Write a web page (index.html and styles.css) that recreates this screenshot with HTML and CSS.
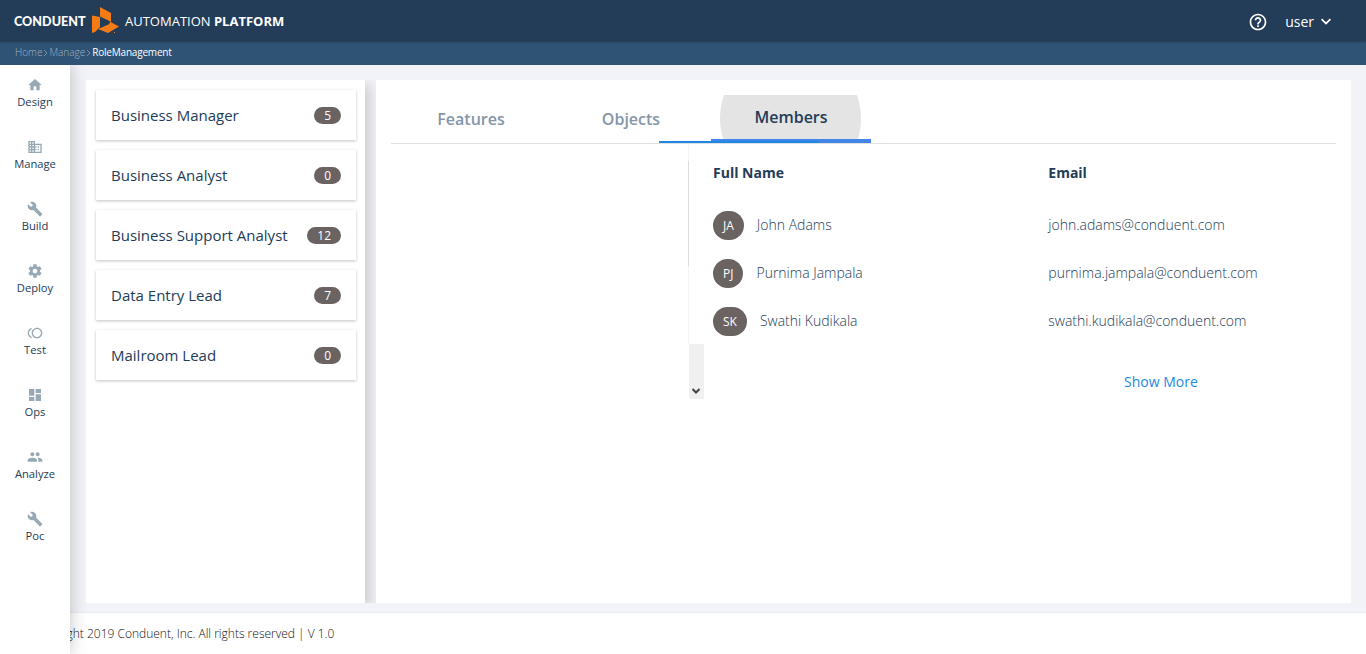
FILE: index.html
```html
<!DOCTYPE html>
<html lang="en">
<head>
<meta charset="utf-8">
<title>Role Management</title>
<link rel="stylesheet" href="styles.css">
</head>
<body>
<div class="app">
  <header class="topbar">
    <div class="brand">
      <span class="brand-name">CONDUENT</span>
      <svg class="brand-mark" viewBox="0 0 27 27"><g fill="#f57c14"><path d="M8 0L19 6V15L17.500 14L8 9.500Z"/><path d="M0 8.500L8 10V20L3 25L0 26Z"/><path d="M17.500 14.500L27 19.500L16 26L6 22L17.500 17Z"/><path d="M22 25h1v1h-1z"/></g><path d="M8.500 10.500L18 15.500L8.500 20.500Z" fill="#233c58"/></svg>
      <span class="product">AUTOMATION <b>PLATFORM</b></span>
    </div>
    <div class="account">
      <svg class="help" viewBox="0 0 24 24"><path d="M11 18h2v-2h-2v2zm1-16C6.480 2 2 6.480 2 12s4.480 10 10 10 10-4.480 10-10S17.520 2 12 2zm0 18c-4.410 0-8-3.590-8-8s3.590-8 8-8 8 3.590 8 8-3.590 8-8 8zm0-14c-2.210 0-4 1.790-4 4h2c0-1.100.9-2 2-2s2 .9 2 2c0 2-3 1.750-3 5h2c0-2.250 3-2.500 3-5 0-2.210-1.790-4-4-4z"/></svg>
      <span class="user">user</span>
      <svg class="caret" viewBox="0 0 24 24"><path d="M7.410 7.840L12 12.420l4.590-4.580L18 9.250l-6 6-6-6z"/></svg>
    </div>
  </header>
  <nav class="crumbs">
    <span>Home</span><svg viewBox="0 0 5 8"><path d="M1 1l3 3-3 3"/></svg><span>Manage</span><svg viewBox="0 0 5 8"><path d="M1 1l3 3-3 3"/></svg><span class="current">RoleManagement</span>
  </nav>
  <div class="shell">
    <aside class="sidebar">
      <a class="nav-item"><svg viewBox="0 0 24 24"><path d="M10 20v-6h4v6h5v-8h3L12 3 2 12h3v8z"/></svg>Design</a>
      <a class="nav-item"><svg viewBox="0 0 24 24"><path d="M12 7V3H2v18h20V7H12zM6 19H4v-2h2v2zm0-4H4v-2h2v2zm0-4H4V9h2v2zm0-4H4V5h2v2zm4 12H8v-2h2v2zm0-4H8v-2h2v2zm0-4H8V9h2v2zm0-4H8V5h2v2zm10 12h-8v-2h2v-2h-2v-2h2v-2h-2V9h8v10zm-2-8h-2v2h2v-2zm0 4h-2v2h2v-2z"/></svg>Manage</a>
      <a class="nav-item"><svg viewBox="0 0 24 24"><path d="M22.700 19l-9.100-9.100c.9-2.300.4-5-1.500-6.900-2-2-5-2.400-7.400-1.300L9 6 6 9 1.600 4.700C.4 7.100.9 10.100 2.900 12.100c1.900 1.900 4.600 2.400 6.900 1.500l9.100 9.100c.4.4 1 .4 1.400 0l2.300-2.300c.5-.4.5-1.100.1-1.400z"/></svg>Build</a>
      <a class="nav-item"><svg viewBox="0 0 24 24"><path d="M19.430 12.980c.04-.32.07-.64.07-.98s-.03-.66-.07-.98l2.110-1.650c.19-.15.24-.42.12-.64l-2-3.460c-.12-.22-.39-.3-.61-.22l-2.490 1c-.52-.4-1.080-.73-1.690-.98l-.38-2.650C14.460 2.180 14.250 2 14 2h-4c-.25 0-.46.18-.49.42l-.38 2.650c-.61.25-1.170.59-1.690.98l-2.490-1c-.23-.09-.49 0-.61.22l-2 3.460c-.13.22-.07.49.12.64l2.110 1.650c-.04.32-.07.65-.07.98s.03.66.07.98l-2.110 1.650c-.19.15-.24.42-.12.64l2 3.460c.12.22.39.3.61.22l2.490-1c.52.4 1.080.73 1.690.98l.38 2.650c.03.24.24.42.49.42h4c.25 0 .46-.18.49-.42l.38-2.650c.61-.25 1.170-.59 1.690-.98l2.490 1c.23.09.49 0 .61-.22l2-3.460c.12-.22.07-.49-.12-.64l-2.110-1.650zM12 15.500c-1.930 0-3.500-1.570-3.500-3.500s1.570-3.500 3.500-3.500 3.500 1.570 3.500 3.500-1.570 3.500-3.500 3.500z"/></svg>Deploy</a>
      <a class="nav-item"><svg viewBox="0 0 24 24"><path d="M15 4c-4.420 0-8 3.580-8 8s3.580 8 8 8 8-3.580 8-8-3.580-8-8-8zm0 14c-3.310 0-6-2.690-6-6s2.690-6 6-6 6 2.690 6 6-2.690 6-6 6zM3 12c0-2.610 1.670-4.830 4-5.650V4.260C3.550 5.150 1 8.270 1 12s2.550 6.850 6 7.740v-2.090c-2.330-.82-4-3.040-4-5.650z"/></svg>Test</a>
      <a class="nav-item"><svg viewBox="0 0 24 24"><path d="M3 13h8V3H3v10zm0 8h8v-6H3v6zm10 0h8V11h-8v10zm0-18v6h8V3h-8z"/></svg>Ops</a>
      <a class="nav-item"><svg viewBox="0 0 24 24"><path d="M16 11c1.660 0 2.990-1.340 2.990-3S17.660 5 16 5c-1.660 0-3 1.340-3 3s1.340 3 3 3zm-8 0c1.660 0 2.990-1.340 2.990-3S9.660 5 8 5C6.340 5 5 6.340 5 8s1.340 3 3 3zm0 2c-2.330 0-7 1.170-7 3.500V19h14v-2.500c0-2.330-4.670-3.500-7-3.500zm8 0c-.29 0-.62.02-.97.05 1.160.84 1.970 1.970 1.970 3.450V19h6v-2.500c0-2.330-4.670-3.500-7-3.500z"/></svg>Analyze</a>
      <a class="nav-item"><svg viewBox="0 0 24 24"><path d="M22.700 19l-9.100-9.100c.9-2.300.4-5-1.500-6.900-2-2-5-2.400-7.400-1.300L9 6 6 9 1.600 4.700C.4 7.100.9 10.100 2.900 12.100c1.900 1.900 4.600 2.400 6.900 1.500l9.100 9.100c.4.4 1 .4 1.400 0l2.300-2.300c.5-.4.5-1.100.1-1.400z"/></svg>Poc</a>
    </aside>
    <div class="page">
      <main class="content">
        <section class="roles">
          <div class="role">Business Manager<span class="count">5</span></div>
          <div class="role">Business Analyst<span class="count">0</span></div>
          <div class="role">Business Support Analyst<span class="count">12</span></div>
          <div class="role">Data Entry Lead<span class="count">7</span></div>
          <div class="role">Mailroom Lead<span class="count">0</span></div>
        </section>
        <section class="detail">
          <div class="tabs">
            <div class="tab">Features</div>
            <div class="tab">Objects</div>
            <div class="tab active"><i class="ripple"></i><span>Members</span></div>
            <i class="ink"></i>
          </div>
          <div class="detail-body">
            <div class="rail">
              <i class="rail-line"></i>
              <div class="scroll-end"><svg viewBox="0 0 8 6"><path d="M.5 1L4 4.500 7.500 1"/></svg></div>
            </div>
            <div class="members">
              <div class="row head"><span>Full Name</span><span>Email</span></div>
              <div class="row"><span class="person"><b class="avatar">JA</b><span class="value">John Adams</span></span><span class="value">john.adams@conduent.com</span></div>
              <div class="row"><span class="person"><b class="avatar">PJ</b><span class="value">Purnima Jampala</span></span><span class="value">purnima.jampala@conduent.com</span></div>
              <div class="row"><span class="person"><b class="avatar">SK</b><span class="value">Swathi Kudikala</span></span><span class="value">swathi.kudikala@conduent.com</span></div>
              <a class="more">Show More</a>
            </div>
          </div>
        </section>
      </main>
      <footer class="footer"><span>Copyright 2019 Conduent, Inc. All rights reserved | V 1.0</span></footer>
    </div>
  </div>
</div>
</body>
</html>
```

FILE: styles.css
```css
* { box-sizing: border-box; }
body {
  margin: 0;
  font-family: "Open Sans", "Noto Sans", sans-serif;
  color: #233c58;
  overflow: hidden;
}
.app { height: 654px; display: flex; flex-direction: column; }

.topbar {
  height: 41px;
  flex: none;
  background: #233c58;
  color: #fff;
  display: flex;
  justify-content: space-between;
  align-items: center;
  padding: 2px 30px 0 14px;
  box-shadow: 0 1px 2px rgba(0, 0, 0, .3);
  position: relative;
  z-index: 3;
}
.brand { display: flex; align-items: center; }
.brand-name { font: 900 12.6px/16px Lato, sans-serif; width: 72px; white-space: nowrap; }
.brand-mark { width: 27px; height: 27px; margin: -2px 6px 0; }
.product { font-size: 13px; line-height: 18px; white-space: nowrap; margin-top: -2px; }
.account { display: flex; align-items: center; }
.account svg { fill: #fff; }
.help { width: 20px; height: 20px; }
.user { font-size: 14px; line-height: 20px; margin: 0 2px 0 17px; }
.caret { width: 20px; height: 20px; }

.crumbs {
  height: 24px;
  flex: none;
  background: #2f5375;
  display: flex;
  align-items: center;
  padding: 0 0 2px 15px;
  font-size: 10px;
  color: #9fb1c1;
  font-weight: 300;
}
.crumbs svg { width: 5px; height: 8px; margin: 2px 1px 0; fill: none; stroke: #7890a6; }
.crumbs .current { color: #fff; font-weight: 400; letter-spacing: -.2px; }

.shell { flex: 1; display: flex; min-height: 0; }
.sidebar {
  width: 70px;
  flex: none;
  background: #fff;
  padding-top: 11px;
  box-shadow: 0 0 16px rgba(0, 0, 0, .24);
  clip-path: inset(0 -20px 0 0);
  position: relative;
  z-index: 2;
}
.nav-item {
  height: 62px;
  display: flex;
  flex-direction: column;
  align-items: center;
  font-size: 11.2px;
  line-height: 18px;
}
.nav-item svg { width: 16px; height: 16px; fill: #97a9b4; margin: .5px 0; }

.page { flex: 1; display: flex; flex-direction: column; min-width: 0; }
.content {
  height: 548px;
  background: #f2f3f8;
  padding: 15px 15px 9px 16px;
  display: flex;
  gap: 11px;
  border-bottom: 1px solid #ebecf1;
}
.roles {
  width: 279px;
  background: #fff;
  padding: 10px;
  padding-right: 9px;
  display: flex;
  flex-direction: column;
  gap: 10px;
  box-shadow: 5px 5px 12px rgba(0, 0, 0, .16);
  clip-path: inset(0 -11px 0 0);
}
.role {
  height: 50px;
  display: flex;
  align-items: center;
  justify-content: space-between;
  padding: 0 15px;
  font-size: 15px;
  box-shadow: 0 1px 3px rgba(0, 0, 0, .24);
}
.count {
  height: 17px;
  padding: 0 10px;
  border-radius: 9px;
  background: #6b6262;
  color: #fff;
  font-size: 12px;
  line-height: 17px;
}

.detail { flex: 1; background: #fff; padding: 15px; }
.tabs {
  height: 49px;
  display: flex;
  border-bottom: 1px solid #e0e0e0;
  position: relative;
}
.tab {
  width: 160px;
  height: 48px;
  line-height: 48px;
  text-align: center;
  font-size: 16px;
  font-weight: 600;
  color: #8496a8;
}
.tab.active {
  height: 48px;
  line-height: 44px;
  color: #233c58;
  position: relative;
  overflow: hidden;
  border-bottom: 4px solid #4285e8;
}
.tab.active span { position: relative; }
.ripple {
  position: absolute;
  left: 9px;
  top: -47px;
  width: 141px;
  height: 141px;
  border-radius: 50%;
  background: #e4e4e4;
}
.ink {
  position: absolute;
  left: 268px;
  bottom: 0;
  width: 160px;
  height: 2px;
  background: #1e88e5;
}
.detail-body { display: flex; padding-left: 297px; }
.rail { width: 25px; display: flex; flex-direction: column; height: 255px; }
.rail-line {
  width: 1px;
  height: 200px;
  background: linear-gradient(#f3f3f3 17px, #dcdcdc 17px 122px, #f3f3f3 122px);
}
.scroll-end {
  width: 15px;
  height: 55px;
  margin-left: 1px;
  background: #f0f0f0;
  display: flex;
  align-items: flex-end;
  justify-content: center;
  padding: 0 1px 5px 0;
}
.scroll-end svg { width: 8px; height: 6px; fill: none; stroke: #444; stroke-width: 2; }
.members { width: 623px; display: flex; flex-direction: column; }
.row {
  height: 48px;
  display: grid;
  grid-template-columns: 335.3px 1fr;
  align-items: center;
  font-size: 14px;
  font-weight: 300;
}
.row.head { height: 57px; font-weight: 700; }
.person { display: flex; align-items: center; }
.value { padding-bottom: 2px; }
.avatar {
  height: 29px;
  padding: 0 10px;
  margin-right: 13px;
  border-radius: 15px;
  background: #6b6262;
  color: #fff;
  font-size: 12px;
  font-weight: 400;
  line-height: 29px;
}
.more { font-size: 14px; line-height: 20px; color: #1e88e5; margin: 27px 0 0 411px; }

.footer {
  flex: 1;
  background: #fff;
  display: flex;
  align-items: center;
  font-size: 12px;
  font-weight: 300;
  color: #111;
}
.footer span { margin-left: -38px; white-space: nowrap; }
```
